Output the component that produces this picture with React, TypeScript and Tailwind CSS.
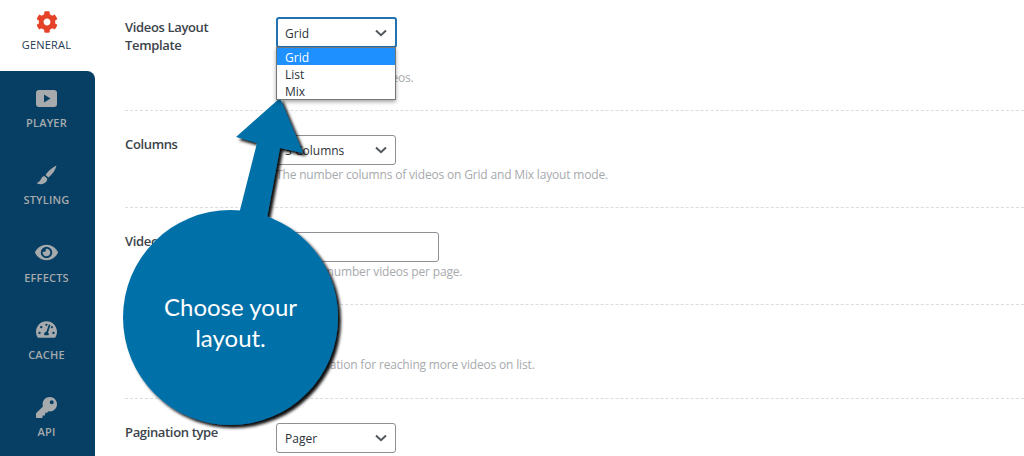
import React from 'react';
import { FaCog, FaEye, FaKey, FaTachometerAlt } from 'react-icons/fa';

function PlayerIcon() {
  return (
    <svg width="21" height="17" viewBox="0 0 21 17">
      <rect width="21" height="17" rx="3" fill="currentColor" />
      <path d="M8 4.5 L14.5 8.5 L8 12.5 Z" fill="#063f63" />
    </svg>
  );
}

function BrushIcon() {
  return (
    <svg width="21" height="21" viewBox="0 0 21 21">
      <path d="M20.5 0.5 C17 2 12.5 5.5 9.5 10 L12.5 12.6 C16.5 9 19.5 5 20.5 0.5 Z" fill="currentColor" />
      <path d="M8.3 11 C6.5 11.3 5.8 12.5 5 14 C4 16 2.5 17.5 0.5 18 C3.5 20 8 19.5 10.2 16.8 C11.2 15.5 11.5 14.3 11 13.3 Z" fill="currentColor" />
    </svg>
  );
}

const navItems = [
  { label: 'PLAYER', icon: <PlayerIcon /> },
  { label: 'STYLING', icon: <BrushIcon /> },
  { label: 'EFFECTS', icon: <FaEye size={23} /> },
  { label: 'CACHE', icon: <FaTachometerAlt size={21} /> },
  { label: 'API', icon: <FaKey size={21} /> },
];

function Chevron() {
  return (
    <svg width="12" height="8" viewBox="0 0 12 8" className="text-[#50575e]">
      <path d="M1 1.5 L6 6.2 L11 1.5" fill="none" stroke="currentColor" strokeWidth="2" />
    </svg>
  );
}

function SelectBox({ value, focused }: { value: string; focused?: boolean }) {
  return (
    <div
      className={
        focused
          ? '-mt-px flex h-[31px] w-[121px] items-center justify-between rounded-[3px] border-2 border-[#2271b1] pl-[7px] pr-2 text-[12px] text-[#2c3338]'
          : 'flex h-[30px] w-[120px] items-center justify-between rounded-[3px] border border-[#8c8f94] pl-2 pr-2 text-[12px] text-[#2c3338]'
      }
    >
      <span className="pt-[2px]">{value}</span>
      <Chevron />
    </div>
  );
}

function Row({
  label,
  hint,
  children,
  className,
}: {
  label: React.ReactNode;
  hint?: string;
  children: React.ReactNode;
  className: string;
}) {
  return (
    <div className={`flex border-b border-dashed border-[#dcdcde] ${className}`}>
      <div className="w-[151px] pr-8 text-[13px] font-semibold leading-[18px] tracking-[-0.35px] text-[#3c434a]">{label}</div>
      <div>
        {children}
        {hint && <p className="mt-px text-[12px] leading-[18px] tracking-[-0.17px] text-[#a7aaad]">{hint}</p>}
      </div>
    </div>
  );
}

function Callout() {
  return (
    <div className="pointer-events-none absolute inset-0">
      <svg width="1024" height="456" className="absolute inset-0">
        <defs>
          <filter id="rough" x="-10%" y="-10%" width="120%" height="120%">
            <feTurbulence type="fractalNoise" baseFrequency="0.6" numOctaves="1" seed="3" />
            <feDisplacementMap in="SourceGraphic" scale="1.6" />
            <feDropShadow dx="3" dy="3" stdDeviation="1.8" floodColor="#000" floodOpacity="0.95" />
          </filter>
        </defs>
        <g filter="url(#rough)" fill="#0070a8">
          <path d="M280 98 L303 153 L280 148 L267 218 L239 214 L257 143 L236 137 Z" />
          <circle cx="230.5" cy="317.5" r="107.5" />
        </g>
      </svg>
      <div className="absolute left-[123px] top-[291px] w-[215px] text-center font-['Lato',sans-serif] text-[24px] leading-[31px] text-white">
        Choose your
        <br />
        layout.
      </div>
    </div>
  );
}

export default function App() {
  return (
    <div className="relative flex h-[456px] w-[1024px] overflow-hidden bg-white font-['Open_Sans',sans-serif]">
      <aside className="flex w-[95px] shrink-0 flex-col">
        <div className="flex h-[71px] shrink-0 flex-col items-center pr-[2px] pt-[11px] text-[#e4432a]">
          <FaCog size={22} />
          <span className="mt-[5px] text-[11px] font-medium leading-[14px] tracking-[0.2px] text-[#1d3a52]">GENERAL</span>
        </div>
        <nav className="flex-1 rounded-tr-lg bg-[#063f63]">
          {navItems.map((item) => (
            <div key={item.label} className="flex h-[77.25px] flex-col items-center pr-[2px] pt-[15px] text-[#a7aaad]">
              <div className="flex h-[24px] items-center">{item.icon}</div>
              <span className="mt-[6px] text-[11px] font-semibold leading-[14px] tracking-[0.2px]">{item.label}</span>
            </div>
          ))}
        </nav>
      </aside>

      <main className="flex-1 pl-[30px]">
        <Row label={<>Videos Layout<br />Template</>} hint="Select a layout for videos." className="h-[111px] pt-[18px]">
          <div className="relative mb-[21px]">
            <SelectBox value="Grid" focused />
            <div className="absolute left-0 top-[30px] z-10 w-[120px] border border-[#767676] bg-white text-[12px] text-[#2c3338] shadow-[0_2px_4px_rgba(0,0,0,0.35)]">
              <div className="h-[17px] bg-[#1e90ff] pl-2 leading-[19px] text-white">Grid</div>
              <div className="h-[17px] pl-2 leading-[19px]">List</div>
              <div className="h-[17px] pl-2 leading-[19px]">Mix</div>
            </div>
          </div>
        </Row>
        <Row label="Columns" hint="The number columns of videos on Grid and Mix layout mode." className="h-[97px] pt-[24px]">
          <SelectBox value="3 Columns" />
        </Row>
        <Row label="Videos per page" hint="Limit the number videos per page." className="h-[97px] pt-[24px]">
          <div className="h-[30px] w-[163px] rounded-[3px] border border-[#8c8f94]" />
        </Row>
        <Row label="Pagination" hint="Use pagination for reaching more videos on list." className="h-[94px] pt-[24px]">
          <div className="h-[26px] w-[52px]" />
        </Row>
        <div className="flex pt-[24px]">
          <div className="w-[151px] text-[13px] font-semibold leading-[18px] tracking-[-0.35px] text-[#3c434a]">Pagination type</div>
          <SelectBox value="Pager" />
        </div>
      </main>

      <Callout />
    </div>
  );
}
